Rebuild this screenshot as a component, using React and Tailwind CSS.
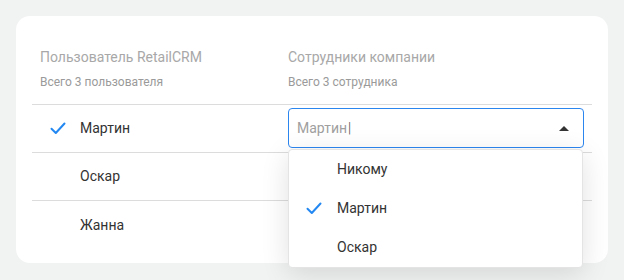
import React from 'react';

const Check = ({ className }) => (
  <svg className={className} width="16" height="13" viewBox="0 0 16 13" fill="none">
    <path d="M1.5 6.8 L5.8 11 L14.5 1.5" stroke="#2488f2" strokeWidth="2" strokeLinecap="round" strokeLinejoin="round" />
  </svg>
);

const users = [
  { name: 'Мартин', checked: true },
  { name: 'Оскар', checked: false },
  { name: 'Жанна', checked: false },
];

const options = [
  { name: 'Никому', checked: false },
  { name: 'Мартин', checked: true },
  { name: 'Оскар', checked: false },
];

export default function App() {
  return (
    <div
      className="w-[624px] h-[280px] bg-[#f1f2f2] p-4"
      style={{ fontFamily: 'Roboto, "Liberation Sans", sans-serif' }}
    >
      <div className="bg-white rounded-[14px] h-[247px] px-4 pt-[31px] relative">
        {/* header */}
        <div className="flex pb-[14px] border-b border-[#dcdcdc]">
          <div className="w-[256px] pl-2">
            <div className="text-[14px] leading-5 text-[#a8a8a8]">Пользователь RetailCRM</div>
            <div className="text-[12px] leading-4 mt-[7px] text-[#9a9a9a]">Всего 3 пользователя</div>
          </div>
          <div>
            <div className="text-[14px] leading-5 text-[#a8a8a8]">Сотрудники компании</div>
            <div className="text-[12px] leading-4 mt-[7px] text-[#9a9a9a]">Всего 3 сотрудника</div>
          </div>
        </div>

        {/* rows */}
        {users.map((u, i) => (
          <div
            key={u.name}
            className={`flex items-center h-12 ${i < users.length - 1 ? 'border-b border-[#dcdcdc]' : ''}`}
          >
            <div className="w-[256px] flex items-center">
              <div className="w-12 flex justify-center pl-[3px]">
                {u.checked && <Check />}
              </div>
              <span className="text-[14px] text-[#333333]">{u.name}</span>
            </div>
            {i === 0 && (
              <div className="relative">
                <div className="w-[296px] h-10 mt-[-1px] border border-[#2c86f0] rounded-[4px] flex items-center pl-[8px] pr-[14px]">
                  <span className="text-[14px] text-[#a0a0a0]">Мартин</span>
                  <span className="text-[14px] text-[#444] font-light ml-[1px]">|</span>
                  <div className="ml-auto w-0 h-0 border-l-[5px] border-r-[5px] border-b-[5px] border-l-transparent border-r-transparent border-b-[#333]" />
                </div>
                <div className="absolute left-0 top-[40px] w-[295px] bg-white rounded-[4px] border border-[#e4e4e4] shadow-[0_6px_28px_rgba(0,0,0,0.12)] z-10">
                  {options.map((o) => (
                    <div key={o.name} className="flex items-center h-[39px]">
                      <div className="w-12 flex justify-center pl-[1px]">
                        {o.checked && <Check />}
                      </div>
                      <span className="text-[14px] text-[#333333]">{o.name}</span>
                    </div>
                  ))}
                </div>
              </div>
            )}
          </div>
        ))}
      </div>
    </div>
  );
}
